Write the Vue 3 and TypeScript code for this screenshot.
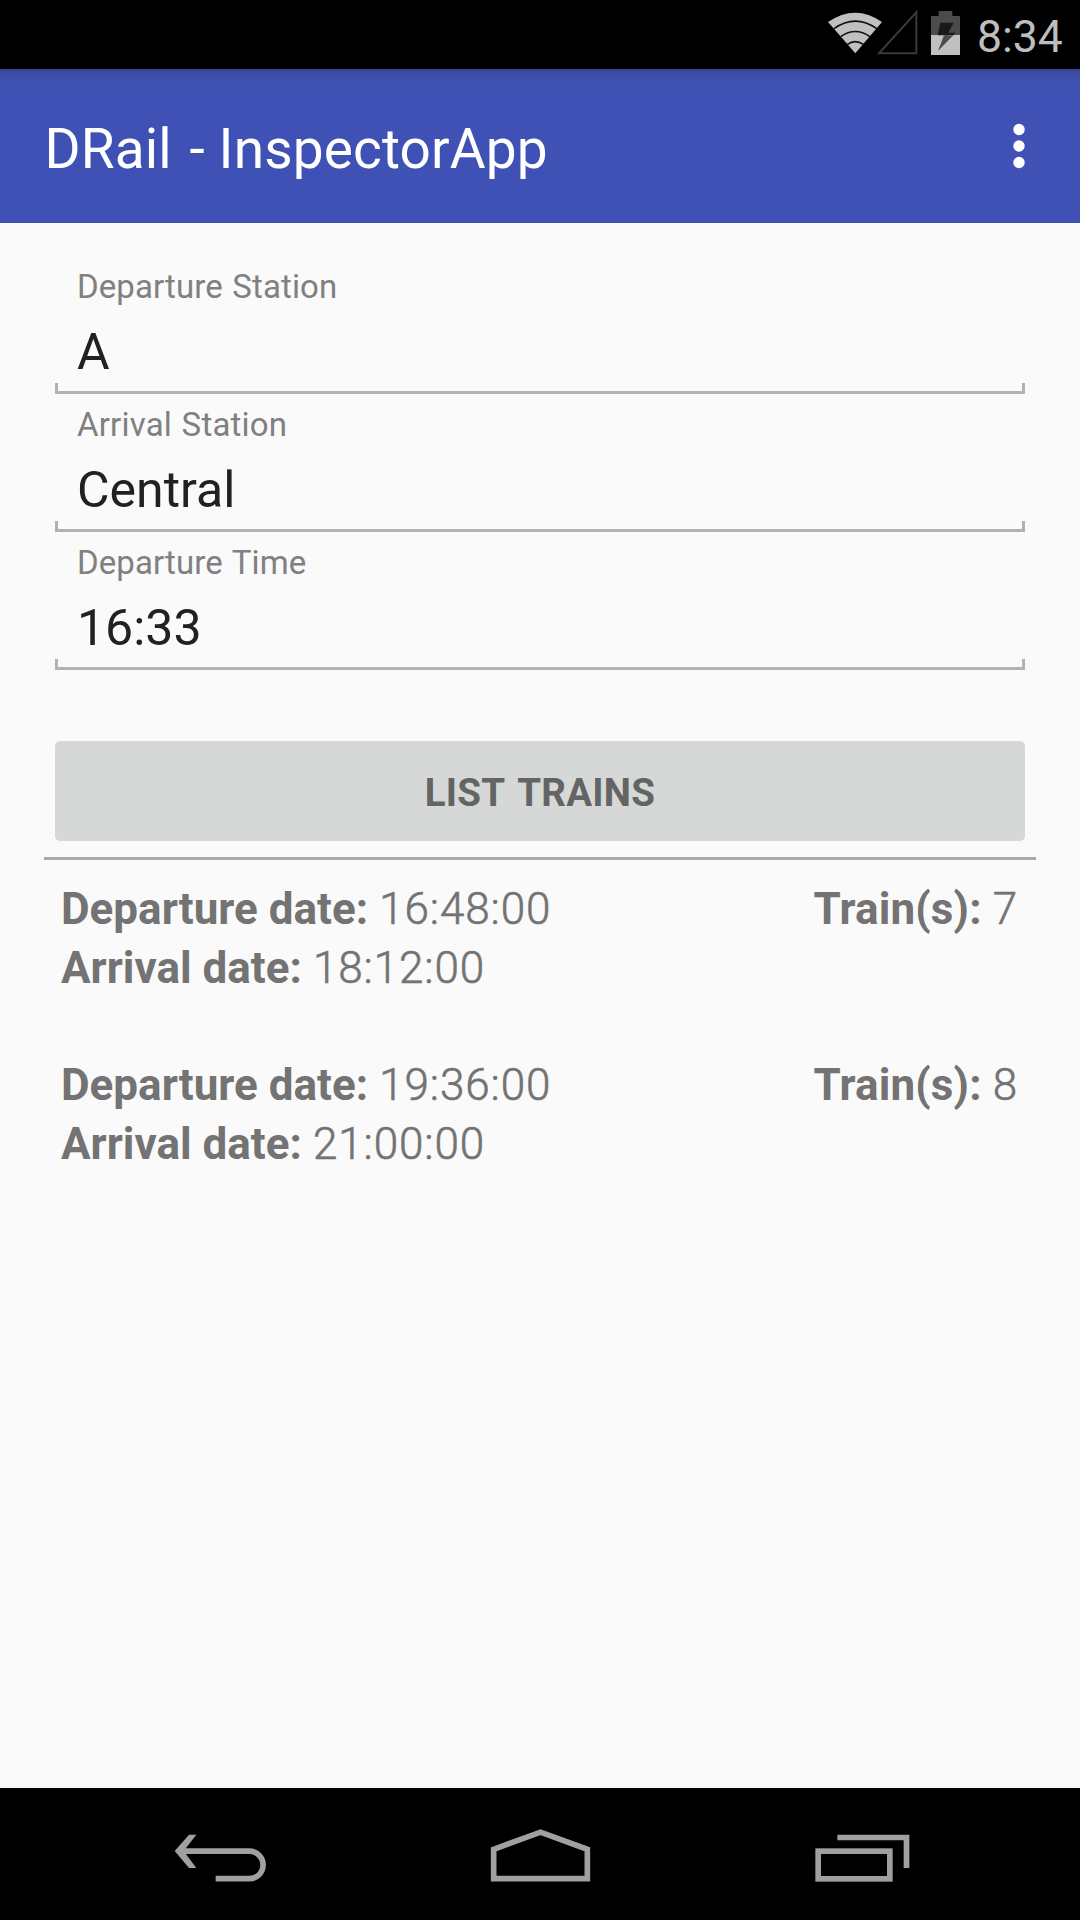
<script setup lang="ts">
interface Field {
  label: string
  value: string
  labelClass: string
}
interface Trip {
  departure: string
  arrival: string
  train: number
}

const fields: Field[] = [
  { label: 'Departure Station', value: 'A', labelClass: 'normal' },
  { label: 'Arrival Station', value: 'Central', labelClass: 'loose' },
  { label: 'Departure Time', value: '16:33', labelClass: 'normal' },
]

const trips: Trip[] = [
  { departure: '16:48:00', arrival: '18:12:00', train: 7 },
  { departure: '19:36:00', arrival: '21:00:00', train: 8 },
]
</script>

<template>
  <div class="screen">
    <header class="status">
      <svg class="status-icons" width="140" height="69" viewBox="48 0 420 207">
        <path d="M136 160 L54 66 Q136 10 216 66 Z" fill="#c0c0c0" />
        <g fill="none" stroke="#111" stroke-width="5">
          <path d="M72 86 Q136 41 200 86" />
          <path d="M92 110 Q136 79 180 110" />
          <path d="M112 133 Q136 117 160 133" />
        </g>
        <path d="M207 160 H319 V37 Z" fill="none" stroke="#3a3a3a" stroke-width="6" />
        <path d="M363 48 H386 V33 H427 V48 H450 V105 H363 Z" fill="#4b4b4b" />
        <rect x="363" y="105" width="87" height="60" fill="#c0c0c0" />
        <path d="M391 68 H431 L415 98 H436 L429 106 H383 Z" fill="#191919" />
        <path d="M402 106 H430 L384 153 Z" fill="#4b4b4b" />
      </svg>
      <span class="clock">8:34</span>
    </header>

    <div class="toolbar">
      <h1 class="title"><span class="brand">DRail</span> - InspectorApp</h1>
      <svg class="more" width="12" height="46" viewBox="0 0 12 46" fill="#fff">
        <circle cx="6" cy="6.500" r="5.700" />
        <circle cx="6" cy="23" r="5.700" />
        <circle cx="6" cy="39.500" r="5.700" />
      </svg>
    </div>

    <main class="content">
      <div class="form">
        <div v-for="f in fields" :key="f.label" class="field">
          <div class="label" :class="f.labelClass">{{ f.label }}</div>
          <div class="value">{{ f.value }}</div>
          <div class="underline"></div>
        </div>
      </div>

      <button class="list-btn" type="button">LIST TRAINS</button>
      <div class="divider"></div>

      <div class="trips">
        <div v-for="t in trips" :key="t.train" class="trip">
          <div>
            <div class="line"><b>Departure date:</b><span class="time">{{ t.departure }}</span></div>
            <div class="line"><b>Arrival date:</b><span class="time">{{ t.arrival }}</span></div>
          </div>
          <div class="line train"><b>Train(s):</b><span class="time">{{ t.train }}</span></div>
        </div>
      </div>
    </main>

    <nav class="nav">
      <svg width="140" height="132" viewBox="0 24 420 396">
        <path d="M95 213.500 H298 A41 41 0 0 1 298 296 H197" fill="none" stroke="#a0a0a0" stroke-width="17" />
        <path d="M74 213 L117 164 H139 L101 213 L139 264 H117 Z" fill="#a0a0a0" />
      </svg>
      <svg width="140" height="132" viewBox="0 24 420 396">
        <path d="M71 208 L211.500 156.500 L352 208 V296 H71 Z" fill="none" stroke="#a0a0a0" stroke-width="17" />
      </svg>
      <svg width="140" height="132" viewBox="0 24 420 396">
        <g fill="none" stroke="#a0a0a0" stroke-width="17">
          <rect x="84.500" y="213.500" width="215" height="83" />
          <path d="M142 172.500 H349.500 V264" />
        </g>
      </svg>
    </nav>
  </div>
</template>

<style>
body {
  margin: 0;
  background: #fafafa;
}
</style>

<style scoped>
.screen {
  width: 1080px;
  height: 1920px;
  display: flex;
  flex-direction: column;
  background: #fafafa;
  font-family: Roboto, "Liberation Sans", sans-serif;
  overflow: hidden;
}
.status {
  height: 69px;
  flex: none;
  background: #000;
  display: flex;
  justify-content: flex-end;
  padding-right: 16px;
}
.status-icons {
  margin-right: 11px;
}
.clock {
  width: 87px;
  font-size: 44.500px;
  line-height: 75px;
  color: #bebebe;
  white-space: nowrap;
}
.toolbar {
  height: 154px;
  flex: none;
  box-sizing: border-box;
  padding: 0 55px 0 44.500px;
  display: flex;
  justify-content: space-between;
  background: linear-gradient(#35448f 0, #3b4da6 5px, #3e50b0 12px, #3f51b5 22px);
  color: #fff;
}
.title {
  margin: 0;
  font-size: 55px;
  line-height: 160px;
  font-weight: 400;
  letter-spacing: 0.12px;
  white-space: nowrap;
}
.brand {
  margin-right: 4px;
}
.more {
  margin-top: 54px;
}
.content {
  flex: 1;
  padding: 33px 44px 0;
}
.form {
  padding: 0 11px;
}
.field {
  height: 138px;
  display: flex;
  flex-direction: column;
  white-space: nowrap;
}
.label {
  height: 61px;
  padding-left: 22px;
  font-size: 33px;
  line-height: 61px;
  color: #808080;
}
.normal {
  letter-spacing: 0.100px;
  word-spacing: 1.200px;
}
.loose {
  letter-spacing: 0.200px;
  word-spacing: 1.200px;
}
.value {
  height: 66px;
  padding-left: 22px;
  font-size: 50px;
  line-height: 71px;
  color: #212121;
}
.underline {
  height: 11px;
  box-sizing: border-box;
  border: 3px solid #b2b2b2;
  border-top: 0;
}
.list-btn {
  display: block;
  width: 970px;
  height: 100px;
  margin: 71px 11px 16px;
  padding: 4px 0 0;
  border: 0;
  border-radius: 5px;
  background: #d6d8d7;
  color: #636564;
  font: 700 38.500px/96px Roboto, "Liberation Sans", sans-serif;
  letter-spacing: 0.250px;
  word-spacing: 4px;
}
.divider {
  height: 3px;
  background: #a9a9a9;
}
.trips {
  padding: 20px 18px 0 17px;
}
.trip {
  display: flex;
  justify-content: space-between;
  height: 176px;
  font-size: 44px;
  color: #737373;
  white-space: nowrap;
}
.line {
  height: 59px;
  line-height: 59px;
  display: flex;
}
.line b {
  font-weight: 700;
  margin-right: 11px;
}
.train b {
  letter-spacing: 0.150px;
}
.time {
  font-weight: 300;
  letter-spacing: 0.900px;
  -webkit-text-stroke: 0.600px #737373;
}
.nav {
  height: 132px;
  flex: none;
  background: #000;
  display: flex;
  justify-content: space-between;
  padding: 0 150px;
}
</style>
